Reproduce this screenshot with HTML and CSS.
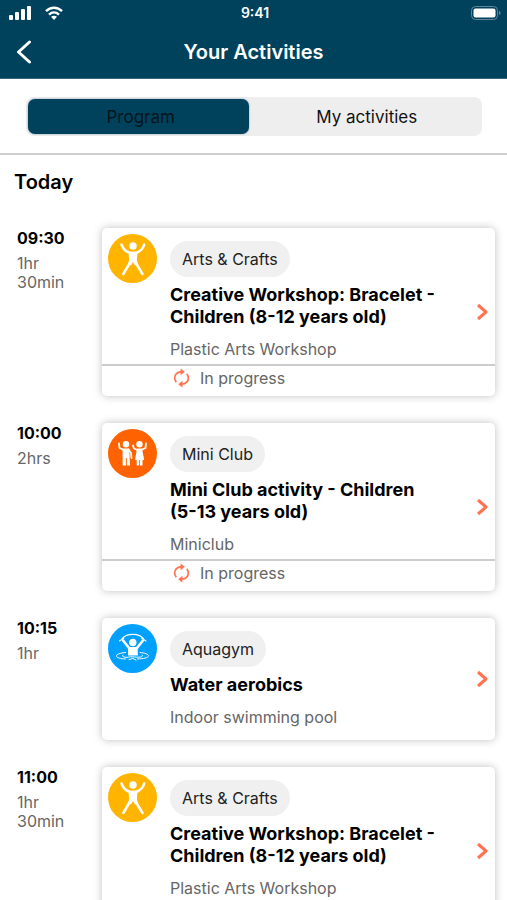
FILE: index.html
```html
<!DOCTYPE html>
<html lang="en">
<head>
<meta charset="utf-8">
<meta name="viewport" content="width=device-width, initial-scale=1">
<title>Your Activities</title>
<link rel="stylesheet" href="styles.css">
</head>
<body>
<svg class="sprite" aria-hidden="true">
  <symbol id="person" viewBox="0 0 49 49">
    <circle cx="24.500" cy="24.500" r="24.500" fill="#ffb400"/>
    <g fill="none" stroke="#fff" stroke-width="2.500" stroke-linecap="round" stroke-linejoin="round">
      <path d="M13.500 10.500c1.500 4.500 4.200 7 8.500 8.500h6c4.200-1.500 7-4 8.200-8.500"/>
      <path d="M22.300 28l-7 12M27.300 28l7.200 12"/>
    </g>
    <circle cx="25" cy="12" r="3.700" fill="#fff"/>
    <path d="M20.500 17.800h9l-.6 8.200.9 4-2.800 1.500-2-3.500-2 3.500-2.800-1.500.9-4z" fill="#fff"/>
  </symbol>
  <symbol id="kids" viewBox="0 0 49 49">
    <circle cx="24.500" cy="24.500" r="24.500" fill="#ff6200"/>
    <g fill="#fff">
      <circle cx="18" cy="15.300" r="3.200"/>
      <circle cx="31.500" cy="15.300" r="3.200"/>
      <path d="M14.500 19.500h6.800l.7 17h-3.200V29h-.9v7.500h-3.200z"/>
      <path d="M29 19.500h5l2.200 11.500h-1.700v5.500H32V31h-.8v5.500h-2.500V31H27z"/>
    </g>
    <g fill="none" stroke="#fff" stroke-width="1.800" stroke-linecap="round" stroke-linejoin="round">
      <path d="M11 14.500l.5 4.500 4 1.800M20.500 20.500l2.500 3.500.5 5M38 14.500l-.5 4.500-4 1.800M29.500 21l-3.500-1.500-1-3"/>
    </g>
  </symbol>
  <symbol id="aqua" viewBox="0 0 49 49">
    <circle cx="24.500" cy="24.500" r="24.500" fill="#00a0ff"/>
    <circle cx="24.800" cy="18.500" r="3.700" fill="#fff"/>
    <path d="M20 23h9.500l.4 8.500h-9.800z" fill="#fff"/>
    <g fill="none" stroke="#fff" stroke-linecap="round" stroke-linejoin="round">
      <path stroke-width="2.600" d="M21.500 24.500l-6.500-8M28.500 24.500l6.500-8"/>
      <path stroke-width="1.100" d="M14 14.500c5-5.500 16.500-5.500 21.500 0M11.500 17l4.500-3M38 17l-4.500-3"/>
      <path stroke-width="1" d="M17.500 28.500c-5.500.5-9 1.800-9 3.500s4 2.800 9 3M32 28.500c5 .4 8.500 1.800 8.500 3.300 0 2-5 3-11 3.200M15 31c-1 .8-.5 1.800 2 2.200 3 .5 4.500-.6 7.500-.4s5 .7 8 .2c2-.4 2.500-1.200 1.500-2M21 35.500l4-1 3 1.500"/>
    </g>
  </symbol>
  <symbol id="chevron" viewBox="0 0 12 18">
    <path d="M2 2l8 7-8 7" fill="none" stroke="#ff7350" stroke-width="3" stroke-linejoin="round"/>
  </symbol>
  <symbol id="sync" viewBox="0 0 20 20">
    <g fill="none" stroke="#ff7350" stroke-width="1.800">
      <path d="M9.500 3.500C5 3.500 2.800 7 2.800 10c0 1.800.7 3.200 1.700 4.400M10.500 16.500c4.500 0 6.700-3.500 6.700-6.500 0-1.800-.7-3.200-1.700-4.400"/>
    </g>
    <path d="M9 0l4.500 3.500L9 7zM11 20l-4.500-3.500L11 13z" fill="#ff7350"/>
  </symbol>
</svg>

<div class="app">
  <header class="top">
    <div class="status">
      <div class="signal">
        <svg width="22" height="14" viewBox="0 0 22 14" fill="#fff" aria-hidden="true">
          <rect x="0" y="9" width="4" height="5" rx="1"/><rect x="6" y="6" width="4" height="8" rx="1"/><rect x="12" y="3" width="4" height="11" rx="1"/><rect x="18" y="0" width="4" height="14" rx="1"/>
        </svg>
        <svg width="18" height="14" viewBox="0 0 18 14" aria-hidden="true">
          <g fill="none" stroke="#fff" stroke-width="2.400"><path d="M1 5.200c4.500-4.600 11.500-4.600 16 0M4 8.600c3-2.800 7-2.800 10 0"/></g>
          <path d="M9 14l-3-3.200c1.800-1.500 4.200-1.500 6 0z" fill="#fff"/>
        </svg>
      </div>
      <span class="clock">9:41</span>
      <svg class="battery" width="30" height="14" viewBox="0 0 30 14" aria-hidden="true">
        <rect x=".5" y=".5" width="26" height="13" rx="4" fill="none" stroke="#5f8799"/>
        <rect x="2.500" y="2.500" width="22" height="9" rx="2" fill="#fff"/>
        <path d="M28 5c2 .5 2 3.500 0 4z" fill="#5f8799"/>
      </svg>
    </div>
    <div class="nav">
      <button class="back" type="button" aria-label="Back">
        <svg width="16" height="24" viewBox="0 0 16 24" aria-hidden="true"><path d="M13.500 2L2.500 12l11 10" fill="none" stroke="#fff" stroke-width="3" stroke-linecap="round" stroke-linejoin="round"/></svg>
      </button>
      <h1 class="title">Your Activities</h1>
    </div>
  </header>

  <div class="switch">
    <div class="tabs" role="tablist">
      <button class="tab tab-on" type="button" role="tab" aria-selected="true">Program</button>
      <button class="tab" type="button" role="tab" aria-selected="false">My activities</button>
    </div>
  </div>

  <main class="agenda">
    <h2 class="day">Today</h2>

    <section class="slot">
      <div class="when"><time class="start">09:30</time><span class="length">1hr 30min</span></div>
      <a class="card" href="#creative-morning">
        <svg class="badge" aria-hidden="true"><use href="#person"/></svg>
        <div class="info">
          <span class="chip">Arts &amp; Crafts</span>
          <h3 class="name">Creative Workshop: Bracelet - Children (8-12 years old)</h3>
          <p class="place">Plastic Arts Workshop</p>
        </div>
        <svg class="arrow" aria-hidden="true"><use href="#chevron"/></svg>
        <div class="state"><svg class="sync" aria-hidden="true"><use href="#sync"/></svg>In progress</div>
      </a>
    </section>

    <section class="slot">
      <div class="when"><time class="start">10:00</time><span class="length">2hrs</span></div>
      <a class="card" href="#mini-club">
        <svg class="badge" aria-hidden="true"><use href="#kids"/></svg>
        <div class="info">
          <span class="chip">Mini Club</span>
          <h3 class="name">Mini Club activity - Children (5-13 years old)</h3>
          <p class="place">Miniclub</p>
        </div>
        <svg class="arrow" aria-hidden="true"><use href="#chevron"/></svg>
        <div class="state"><svg class="sync" aria-hidden="true"><use href="#sync"/></svg>In progress</div>
      </a>
    </section>

    <section class="slot">
      <div class="when"><time class="start">10:15</time><span class="length">1hr</span></div>
      <a class="card" href="#water-aerobics">
        <svg class="badge" aria-hidden="true"><use href="#aqua"/></svg>
        <div class="info info-last">
          <span class="chip">Aquagym</span>
          <h3 class="name">Water aerobics</h3>
          <p class="place">Indoor swimming pool</p>
        </div>
        <svg class="arrow" aria-hidden="true"><use href="#chevron"/></svg>
      </a>
    </section>

    <section class="slot">
      <div class="when"><time class="start">11:00</time><span class="length">1hr 30min</span></div>
      <a class="card" href="#creative-late">
        <svg class="badge" aria-hidden="true"><use href="#person"/></svg>
        <div class="info">
          <span class="chip">Arts &amp; Crafts</span>
          <h3 class="name">Creative Workshop: Bracelet - Children (8-12 years old)</h3>
          <p class="place">Plastic Arts Workshop</p>
        </div>
        <svg class="arrow" aria-hidden="true"><use href="#chevron"/></svg>
        <div class="state"></div>
      </a>
    </section>
  </main>
</div>
</body>
</html>
```
FILE: styles.css
```css
* { box-sizing: border-box; margin: 0; }

body {
  background: #fff;
  color: #000;
  font-family: Inter, "Liberation Sans", sans-serif;
  font-size: 16px;
}

button { border: 0; padding: 0; background: none; font: inherit; color: inherit; cursor: pointer; }

.sprite { display: none; }

.app { display: flex; flex-direction: column; height: 100vh; }

.top { flex: none; background: #00425b; color: #fff; border-bottom: 1px solid #33687c; }

.status {
  display: grid;
  grid-template-columns: 1fr auto 1fr;
  align-items: center;
  height: 26px;
  padding: 0 6px 0 9px;
}
.signal { display: flex; gap: 14px; }
.clock { font-size: 14px; font-weight: 600; line-height: 20px; }
.battery { justify-self: end; }

.nav {
  display: grid;
  grid-template-columns: 48px 1fr 48px;
  align-items: center;
  height: 52px;
}
.back { height: 48px; padding-left: 16px; display: flex; align-items: center; }
.title { font-size: 20px; font-weight: 600; text-align: center; line-height: 28px; }

.switch { flex: none; padding: 18px 25px 17px 26px; border-bottom: 2px solid #cfcfcf; }
.tabs { display: grid; grid-template-columns: 49fr 51fr; background: #eee; border-radius: 8px; padding: 2px; }
.tab { height: 35px; padding-left: 4px; border-radius: 7px; font-size: 17px; color: #111; }
.tab-on { background: #00425b; color: #06141b; box-shadow: 0 0 2px #7799aa; }

.agenda {
  flex: 1;
  min-height: 0;
  overflow-y: auto;
  scrollbar-width: none;
  padding: 12px 12px 24px 14px;
}
.day { font-size: 20px; font-weight: 600; line-height: 30px; margin-bottom: 31px; }

.slot { display: grid; grid-template-columns: 88px 1fr; margin-bottom: 27px; }

.when { display: flex; flex-direction: column; gap: 6px; padding-left: 3px; }
.start { font-size: 16px; font-weight: 700; line-height: 20px; }
.length { width: 56px; color: #666; line-height: 19px; }

.card {
  display: grid;
  grid-template-columns: 68px 1fr 19px;
  color: inherit;
  text-decoration: none;
  background: #fff;
  border-radius: 5px;
  box-shadow: 0 0 9px rgba(0, 0, 0, 0.25);
}
.badge { width: 49px; height: 49px; margin: 6px; }
.info { padding: 13px 36px 5px 0; min-width: 0; }
.info-last { padding-bottom: 13px; }
.chip {
  display: inline-block;
  height: 36px;
  padding: 0 12px;
  border-radius: 18px;
  background: #f0f0f0;
  color: #222;
  line-height: 36px;
  vertical-align: top;
}
.name { margin-top: 7px; font-size: 18px; font-weight: 700; line-height: 22px; }
.place { margin-top: 11px; color: #666; line-height: 20px; }
.arrow { grid-column: 3; grid-row: 1 / span 2; align-self: center; width: 12px; height: 18px; }
.state {
  grid-column: 1 / -1;
  grid-row: 2;
  display: flex;
  align-items: center;
  gap: 9px;
  height: 32px;
  padding: 0 0 6px 70px;
  border-top: 2px solid #ccc;
  color: #666;
}
.sync { width: 19px; height: 20px; }
```
